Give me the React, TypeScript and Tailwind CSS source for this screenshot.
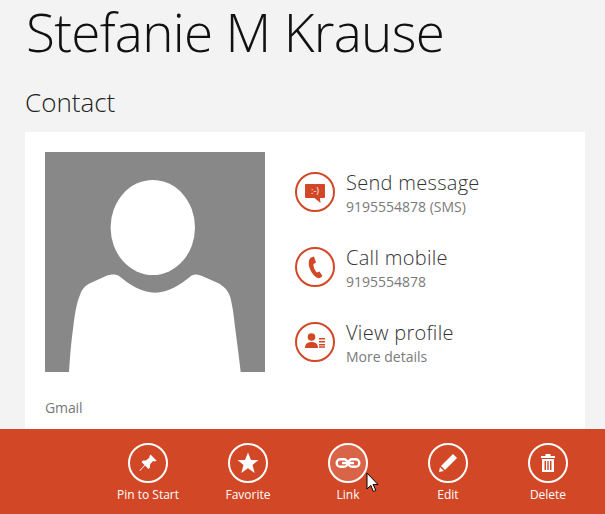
import React from "react";

const ORANGE = "#d24726";

function Ring({ children, light }: { children: React.ReactNode; light?: boolean }) {
  return (
    <svg width="40" height="40" viewBox="0 0 40 40" className="shrink-0">
      <circle cx="20" cy="20" r="19" fill={light ? "rgba(255,255,255,0.16)" : "none"} stroke={light !== undefined ? "#fff" : ORANGE} strokeWidth="2" />
      {children}
    </svg>
  );
}

function ContactRow({ title, sub, icon }: { title: string; sub: string; icon: React.ReactNode }) {
  return (
    <div className="flex items-center gap-[11px] h-[40px]">
      <Ring>{icon}</Ring>
      <div className="flex flex-col gap-[3px] pt-[2px]">
        <div className="text-[20px] leading-[24px] text-[#333] font-light tracking-[0.3px]">{title}</div>
        <div className="text-[14px] leading-[17px] text-[#7a7a7a] tracking-[0px]">{sub}</div>
      </div>
    </div>
  );
}

function Action({ label, icon, hover }: { label: string; icon: React.ReactNode; hover?: boolean }) {
  return (
    <div className="w-[100px] flex flex-col items-center gap-[4px]">
      <Ring light={!!hover}>{icon}</Ring>
      <div className="text-[12px] leading-[16px] text-white">{label}</div>
    </div>
  );
}

export default function App() {
  return (
    <div className="relative w-[605px] h-[514px] overflow-hidden flex flex-col bg-[#f3f3f3] font-['Open_Sans',sans-serif]">
      <div className="pl-[25px] h-[132px] flex flex-col">
        <h1 className="text-[53px] leading-[69px] font-light text-[#111] tracking-[-0.7px] ml-[1px] mt-[-3px] whitespace-nowrap">Stefanie M Krause</h1>
        <h2 className="text-[26px] leading-[32px] font-light text-[#222] mt-[20px]">Contact</h2>
      </div>
      <div className="flex-1 ml-[25px] mr-[20px] bg-white px-[20px] pt-[20px] flex flex-col">
        <div className="flex gap-[30px]">
          <div className="w-[220px] h-[220px] bg-[#888888] shrink-0">
            <svg width="220" height="220" viewBox="0 0 220 220">
              <ellipse cx="107.8" cy="75.5" rx="42.2" ry="47.5" fill="#fff" />
              <path
                d="M24 220 C25 205 26 190 28.3 174.7 C30 160 32 150 35 143 C37 137 41 133 45 131.3 L61 124 C66 122 71 122 74 124 C85 133 97 140.7 110 140.7 C123 140.7 135 133 146 124 C149 122 153 122 157 124 L174 131.5 C180 135 184 140 185.5 146 C188 157 189 165 190 174.7 C192 190 194 205 195.7 220 Z"
                fill="#fff"
              />
            </svg>
          </div>
          <div className="flex flex-col gap-[35px] pt-[20px]">
            <ContactRow
              title="Send message"
              sub="9195554878 (SMS)"
              icon={
                <>
                  <path d="M11 12 H29 Q30 12 30 13 V25 Q30 26 29 26 H25 L25.5 31 L19.5 26 H11 Q10 26 10 25 V13 Q10 12 11 12 Z" fill={ORANGE} />
                  <text x="20" y="22" textAnchor="middle" fontSize="9" fill="#fff" fontFamily="Open Sans">:-)</text>
                </>
              }
            />
            <ContactRow
              title="Call mobile"
              sub="9195554878"
              icon={
                <path
                  d="M16 10.5 L19 9.5 L21 15.5 L18.5 17 C18 19 20 24 22 25.5 L24.5 24.5 L27.5 29 L25 31 C22 32 17.5 28 15 22 C13 17 13.5 12 16 10.5 Z"
                  fill={ORANGE}
                />
              }
            />
            <ContactRow
              title="View profile"
              sub="More details"
              icon={
                <>
                  <circle cx="16.5" cy="15" r="3.8" fill={ORANGE} />
                  <path d="M10 26 C10 22 12.5 20 16.5 20 C20.5 20 23 22 23 26 Z" fill={ORANGE} />
                  <path d="M24 16.7 H30 M24 19.7 H30 M24 22.7 H30 M24 25 H30" stroke={ORANGE} strokeWidth="1.5" />
                </>
              }
            />
          </div>
        </div>
        <div className="mt-[27px] text-[14px] leading-[18px] text-[#777] tracking-[-0.1px]">Gmail</div>
      </div>
      <div className="h-[85px] bg-[#d24726] flex justify-end pr-[7px] pt-[14px] shrink-0">
        <Action
          label="Pin to Start"
          icon={<path d="M22.5 11.5 L28.5 17.5 L27 18.5 L25 18 L22 21.5 L22 24.5 L20.5 26 L17 22.5 L12 28 L11.5 27.5 L16.5 22 L13.5 19 L15 17.5 L18 17.5 L21.5 14.5 L21.5 13 Z" fill="#fff" />}
        />
        <Action
          label="Favorite"
          icon={<path d="M20 9.5 L23 17 L30.5 17 L24.5 22 L26.7 30 L20 25.3 L13.3 30 L15.5 22 L9.5 17 L17 17 Z" fill="#fff" />}
        />
        <Action
          hover
          label="Link"
          icon={
            <g fill="none" stroke="#fff" strokeWidth="2.4">
              <rect x="8.7" y="16.2" width="10.8" height="7.6" rx="3.8" />
              <rect x="20.5" y="16.2" width="10.8" height="7.6" rx="3.8" />
              <path d="M14 20 H26" />
            </g>
          }
        />
        <Action
          label="Edit"
          icon={
            <>
              <path d="M25 11 L29 15 L17 27 L13 23 Z" fill="#fff" />
              <path d="M12 24.2 L15.8 28 L11 29 Z" fill="#fff" />
            </>
          }
        />
        <Action
          label="Delete"
          icon={
            <>
              <path d="M17.5 11 H22.5 V13 H27 V15 H13 V13 H17.5 Z" fill="#fff" />
              <path d="M14 16 H26 V29 H14 Z M16.5 18 V27 H18 V18 Z M19.3 18 V27 H20.7 V18 Z M22 18 V27 H23.5 V18 Z" fill="#fff" fillRule="evenodd" />
            </>
          }
        />
      </div>
      <svg className="absolute left-[366px] top-[472px]" width="13" height="21" viewBox="0 0 13 21">
        <path d="M1 1 V17 L4.8 13.4 L7.4 19.5 L9.8 18.5 L7.2 12.5 L12 12.5 Z" fill="#fff" stroke="#000" strokeWidth="1" />
      </svg>
    </div>
  );
}
